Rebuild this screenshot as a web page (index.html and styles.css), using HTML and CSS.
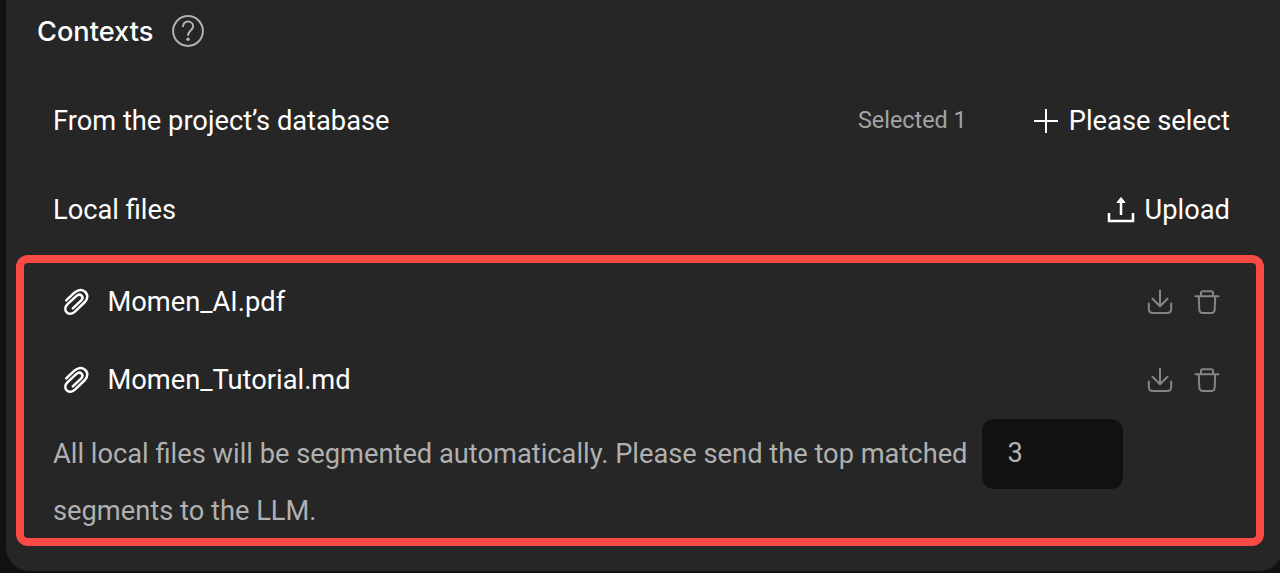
FILE: index.html
```html
<!DOCTYPE html>
<html lang="en">
<head>
<meta charset="utf-8">
<title>Contexts</title>
<link rel="stylesheet" href="styles.css">
</head>
<body>
<svg class="sprite" aria-hidden="true">
  <symbol id="clip" viewBox="0 0 30 30"><path d="M4.200 13.300 11.800 6.200C15 3 19.400 2 22.700 4.400C26.300 7.200 26 11.800 22.900 15L13.200 24.400C10.500 27.100 6.900 27.700 4.700 25.400C2.500 23.100 3 19.800 5.600 17.200L14.200 9.200C16.100 7.500 18.200 7.300 19.600 8.600C21 10.100 20.700 12 19 13.700L10.800 21.300"/></symbol>
  <symbol id="download" viewBox="0 0 26 26"><path d="M13 1.500V17M5.500 9.700 13 17.200 20.500 9.700M1.800 14.500V20Q1.800 24 5.800 24H20.200Q24.200 24 24.200 20V14.500"/></symbol>
  <symbol id="trash" viewBox="0 0 26 26"><path d="M1.500 7.200H24.500M7 7.200V4Q7 2.200 9 2.200H17Q19 2.200 19 4V7.200M4.800 7.200 5.300 20.500Q5.500 24 9 24H17Q20.500 24 20.700 20.500L21.200 7.200"/></symbol>
</svg>
<main class="panel">
  <header class="title">
    <h1>Contexts</h1>
    <svg class="help" viewBox="0 0 32 32"><circle cx="16" cy="16" r="14.900"/><path d="M10.900 12C10.900 8.400 13.100 6.600 16 6.600S21.100 8.500 21.100 11.300C21.100 15.200 16 15.600 16 20.800"/><circle class="dot" cx="16" cy="24.300" r="1.700"/></svg>
  </header>
  <section class="row database">
    <span>From the project’s database</span>
    <span class="count">Selected 1</span>
    <button class="action select"><svg class="plus" viewBox="0 0 24 24"><path d="M12 0V24M0 12H24"/></svg>Please select</button>
  </section>
  <section class="row">
    <span>Local files</span>
    <button class="action upload"><svg class="up" viewBox="0 0 28 28"><path d="M14 19V5M2 17V25H26V17"/><path class="head" d="M14 1.500 18 6.500H10Z"/></svg>Upload</button>
  </section>
  <section class="files">
    <div class="file"><svg class="clip"><use href="#clip"/></svg><span>Momen_AI.pdf</span><svg class="tool"><use href="#download"/></svg><svg class="tool"><use href="#trash"/></svg></div>
    <div class="file"><svg class="clip"><use href="#clip"/></svg><span>Momen_Tutorial.md</span><svg class="tool"><use href="#download"/></svg><svg class="tool"><use href="#trash"/></svg></div>
    <div class="hint"><span>All local files will be segmented automatically. Please send the top matched</span><input class="amount" value="3" aria-label="Matched segments"></div>
    <div class="hint-end">segments to the LLM.</div>
  </section>
</main>
</body>
</html>
```
FILE: styles.css
```css
* { box-sizing: border-box; }
body { margin: 0; height: 573px; overflow: hidden; background: #111; color: #fff; font: 27.28px/40px Roboto, sans-serif; }
.sprite { display: none; }
svg { flex: none; fill: none; stroke: currentColor; }
.panel { width: 1277px; height: 571px; margin-left: 6px; padding: 0 19px 0 10px; background: #262626; border-radius: 0 0 24px 24px; overflow: hidden; }
.title { display: flex; align-items: center; gap: 19px; height: 62px; padding-left: 21px; }
.title h1 { margin: 0; padding-top: 2px; font: 500 27.2px/40px Inter, sans-serif; width: 116px; white-space: nowrap; }
.help { width: 32px; height: 32px; color: #b2b2b2; stroke-width: 2; }
.help .dot { fill: currentColor; stroke: none; }
.row { display: flex; align-items: center; height: 90px; padding: 0 34px 0 37px; }
.database { height: 90px; margin-top: 13px; padding-top: 2px; }
.count { margin-left: auto; padding-bottom: 2px; color: #a3a3a3; font-size: 23.4px; }
.action { display: flex; align-items: center; padding: 0; border: 0; background: none; color: #fff; font: inherit; }
.select { margin-left: 67px; gap: 11px; }
.plus { width: 24px; height: 24px; stroke-width: 2; }
.upload { margin-left: auto; gap: 10px; }
.up { width: 28px; height: 28px; stroke-width: 2.5; }
.up .head { fill: currentColor; stroke-width: 1; }
.files { height: 291px; border: 8px solid #fa4a46; border-radius: 12px; padding: 0 36px 0 29px; }
.file { display: flex; align-items: center; height: 78px; }
.file span { flex: 1; padding-left: 15.500px; }
.clip { width: 30px; height: 30px; margin-left: 9px; stroke-width: 2.500; stroke-linecap: round; }
.tool { width: 26px; height: 26px; color: #858585; stroke-width: 2; stroke-linecap: round; stroke-linejoin: round; }
.tool + .tool { margin-left: 21px; }
.hint { display: flex; align-items: center; gap: 14px; height: 70px; white-space: nowrap; color: #b0b0b0; }
.amount { width: 141px; height: 70px; padding: 0 26px 2px; border: 0; border-radius: 12px; background: #111; color: #b0b0b0; font: inherit; }
.hint-end { padding-top: 2px; color: #b0b0b0; }
```
